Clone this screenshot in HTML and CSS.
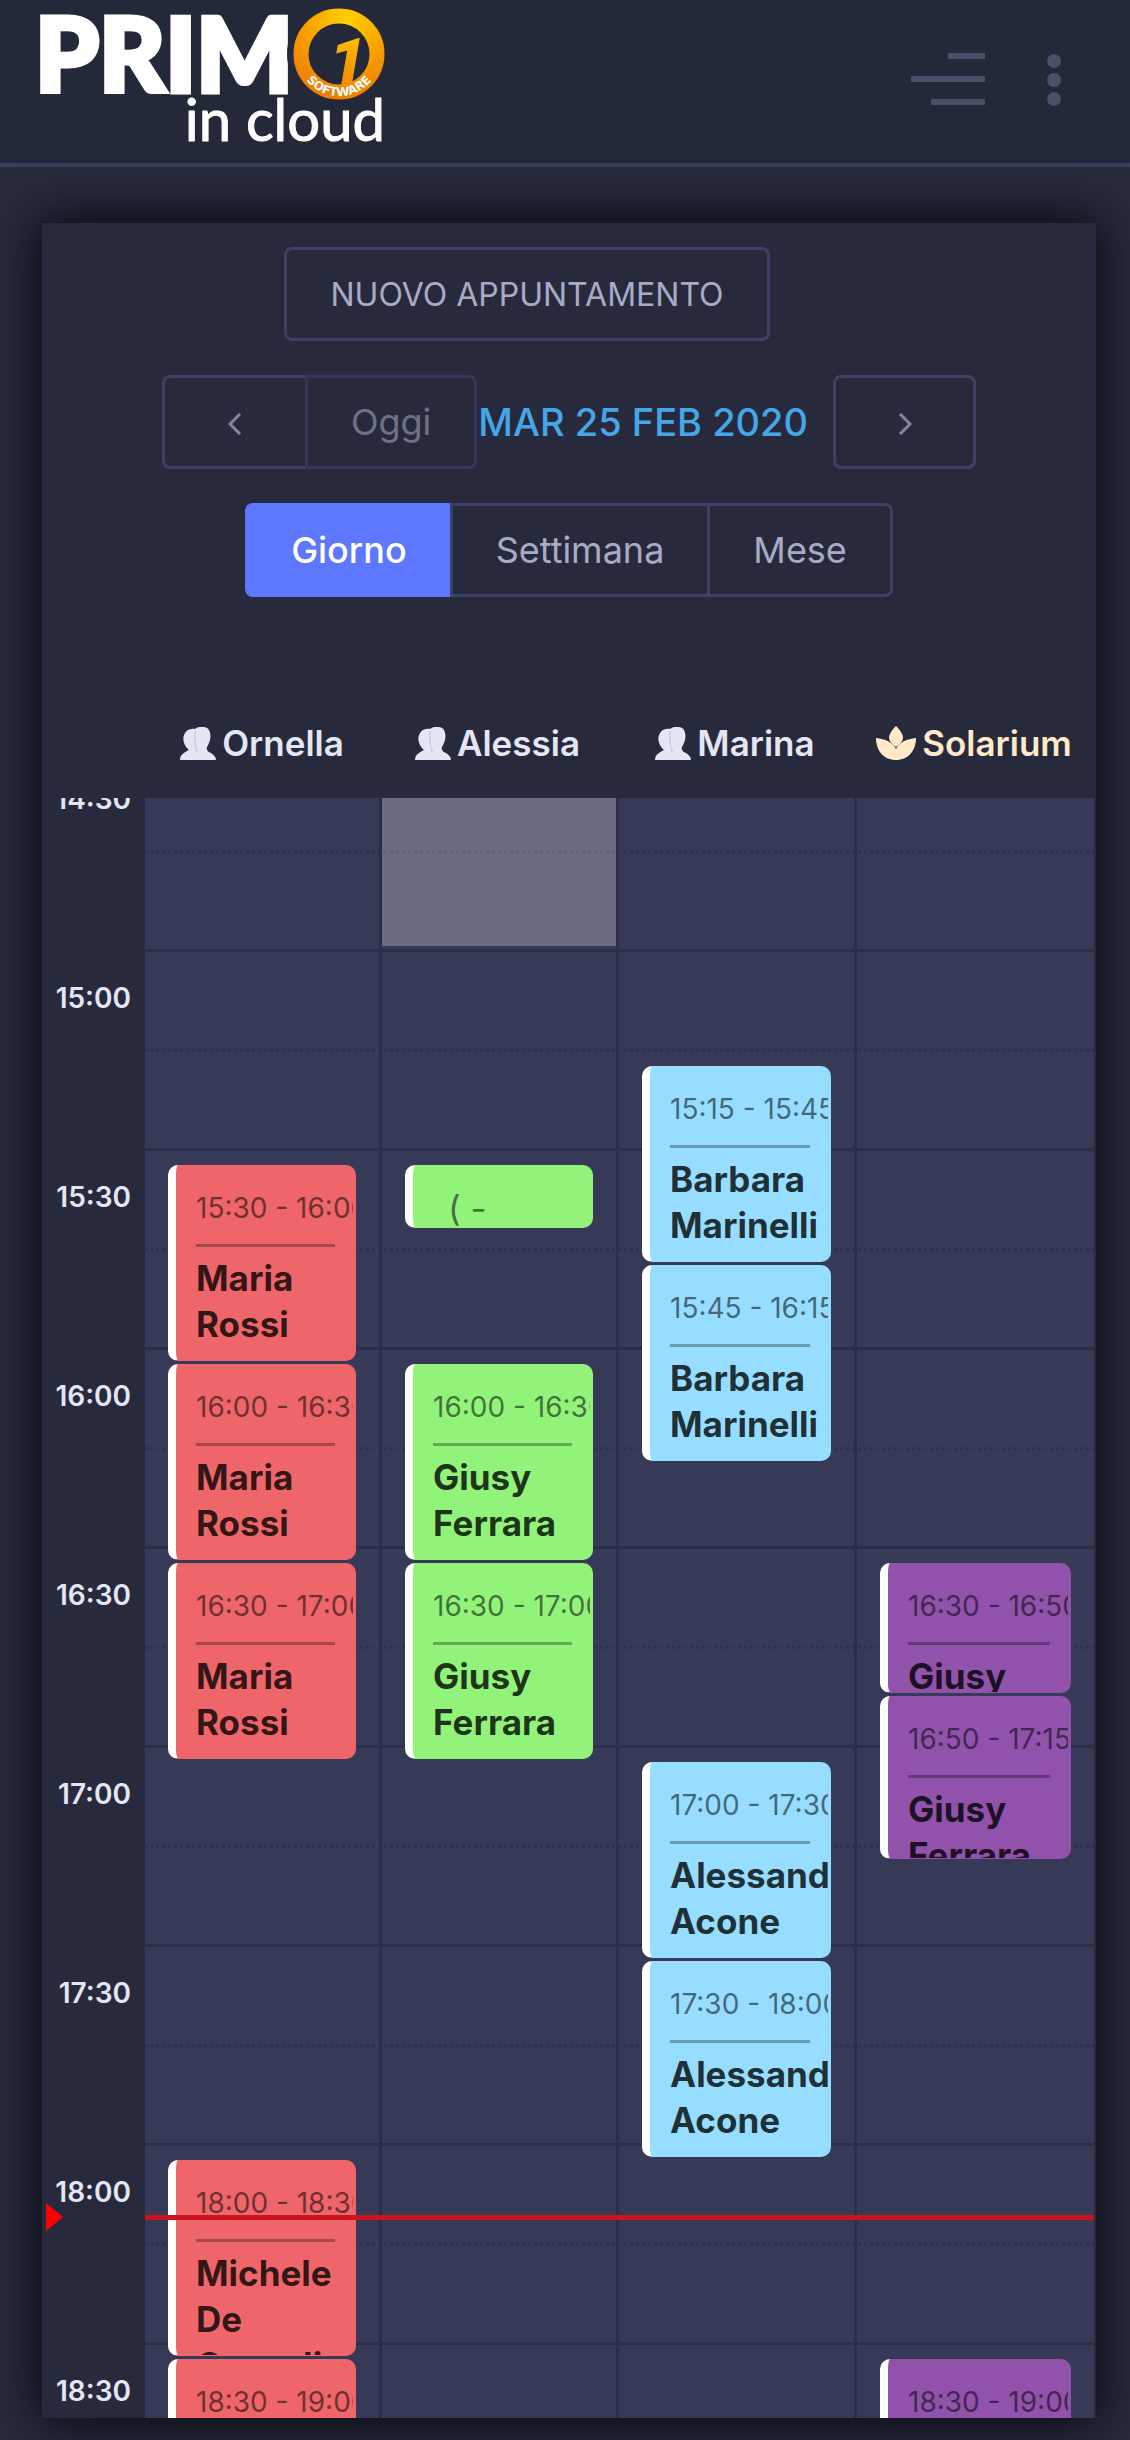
FILE: index.html
```
<!DOCTYPE html>
<html lang="it">
<head>
    <meta charset="UTF-8">
    <meta name="viewport" content="width=device-width, initial-scale=1.0">
    <title>Primo in cloud - Agenda</title>
    <link rel="stylesheet" href="styles.css">
</head>
<body>

    <!-- Icone condivise -->
    <svg class="symbols" aria-hidden="true">
        <symbol id="icon-users" viewBox="0 0 36 33">
            <path d="M0 33 C0 28 3 26 9 23 C5 20 2 13 4 8 C6 3 10 1 15 2 C18 -1 27 -1 29 3 C32 9 30 15 27 20 C26 23 28 25 31 26 C34 28 36 30 36 33 Z" fill="currentColor"/>
            <path d="M16 4 C13 9 16 11 15 16 C15 20 17 21 17 25" fill="none" stroke="#b9bfd3" stroke-width="1"/>
        </symbol>
        <symbol id="icon-spa" viewBox="0 0 40 34">
            <path d="M20 0 C25 5 27 9 27 12 C27 15 24 18 20 21 C16 18 13 15 13 12 C13 9 15 5 20 0 Z" fill="currentColor"/>
            <path d="M0 12 C9 13 17 16 20 23 C23 16 31 13 40 12 C40 25 32 34 20 34 C8 34 0 25 0 12 Z" fill="currentColor"/>
        </symbol>
    </svg>

    <header class="topbar">
        <a href="#" class="logo" aria-label="Primo in cloud">
            <svg width="350" height="150" viewBox="0 0 350 150">
                <defs>
                    <radialGradient id="gold" gradientUnits="userSpaceOnUse" cx="307" cy="22" r="80">
                        <stop offset="0" stop-color="#ffd400"/>
                        <stop offset="0.5" stop-color="#f9a000"/>
                        <stop offset="1" stop-color="#ee7a05"/>
                    </radialGradient>
                    <path id="ring-text" d="M257 54 A42 42 0 0 0 341 54"/>
                </defs>
                <text x="-5" y="92" class="logo-primo">PRIM</text>
                <circle cx="299" cy="54" r="52" fill="#242939"/>
                <circle cx="299" cy="54" r="38" fill="none" stroke="url(#gold)" stroke-width="15"/>
                <text x="289" y="85" class="logo-one" fill="url(#gold)">1</text>
                <text class="logo-software"><textPath href="#ring-text" startOffset="50%" text-anchor="middle">SOFTWARE</textPath></text>
                <text x="345" y="141" text-anchor="end" class="logo-cloud">in cloud</text>
            </svg>
        </a>
        <div class="topbar-actions">
            <button class="icon-button" aria-label="Menu">
                <svg width="76" height="54" viewBox="0 0 76 54" fill="currentColor">
                    <rect x="38" y="0" width="37" height="6" rx="1"/>
                    <rect x="1" y="23" width="74" height="6" rx="1"/>
                    <rect x="21" y="46" width="54" height="6" rx="1"/>
                </svg>
            </button>
            <button class="icon-button" aria-label="Altro">
                <svg width="14" height="54" viewBox="0 0 14 54" fill="currentColor">
                    <circle cx="7" cy="8" r="7"/>
                    <circle cx="7" cy="27" r="7"/>
                    <circle cx="7" cy="46" r="7"/>
                </svg>
            </button>
        </div>
    </header>

    <main class="card">
        <!-- Barra degli strumenti -->
        <div class="toolbar">
            <button class="btn btn-new">NUOVO APPUNTAMENTO</button>
            <div class="toolbar-row">
                <div class="btn-group">
                    <button class="btn btn-arrow" aria-label="Precedente">
                        <svg width="16" height="22" viewBox="0 0 16 22"><path d="M13 1 L3 11 L13 21"/></svg>
                    </button>
                    <button class="btn btn-today" disabled>Oggi</button>
                </div>
                <h2 class="date">MAR 25 FEB 2020</h2>
                <button class="btn btn-arrow" aria-label="Successivo">
                    <svg width="16" height="22" viewBox="0 0 16 22"><path d="M3 1 L13 11 L3 21"/></svg>
                </button>
            </div>
            <div class="btn-group">
                <button class="btn active">Giorno</button>
                <button class="btn">Settimana</button>
                <button class="btn">Mese</button>
            </div>
        </div>

        <!-- Intestazione colonne -->
        <div class="resources">
            <div class="resource"><svg width="36" height="33"><use href="#icon-users"/></svg>Ornella</div>
            <div class="resource"><svg width="36" height="33"><use href="#icon-users"/></svg>Alessia</div>
            <div class="resource"><svg width="36" height="33"><use href="#icon-users"/></svg>Marina</div>
            <div class="resource solarium"><svg width="40" height="34"><use href="#icon-spa"/></svg>Solarium</div>
        </div>

        <!-- Griglia oraria -->
        <div class="scroller">
            <div class="time-grid">
                <div class="slots">
                    <div class="slot"><span class="slot-time">14:30</span></div>
                    <div class="slot minor"></div>
                    <div class="slot"><span class="slot-time">15:00</span></div>
                    <div class="slot minor"></div>
                    <div class="slot"><span class="slot-time">15:30</span></div>
                    <div class="slot minor"></div>
                    <div class="slot"><span class="slot-time">16:00</span></div>
                    <div class="slot minor"></div>
                    <div class="slot"><span class="slot-time">16:30</span></div>
                    <div class="slot minor"></div>
                    <div class="slot"><span class="slot-time">17:00</span></div>
                    <div class="slot minor"></div>
                    <div class="slot"><span class="slot-time">17:30</span></div>
                    <div class="slot minor"></div>
                    <div class="slot"><span class="slot-time">18:00</span></div>
                    <div class="slot minor"></div>
                    <div class="slot"><span class="slot-time">18:30</span></div>
                    <div class="slot minor"></div>
                </div>

                <!-- Una riga ogni 5 minuti a partire dalle 14:30 -->
                <div class="columns">
                    <div class="column">
                        <div class="event red" style="grid-row: 13 / span 6">
                            <div class="event-time">15:30 - 16:00</div>
                            <div class="event-name">Maria Rossi</div>
                        </div>
                        <div class="event red" style="grid-row: 19 / span 6">
                            <div class="event-time">16:00 - 16:30</div>
                            <div class="event-name">Maria Rossi</div>
                        </div>
                        <div class="event red" style="grid-row: 25 / span 6">
                            <div class="event-time">16:30 - 17:00</div>
                            <div class="event-name">Maria Rossi</div>
                        </div>
                        <div class="event red" style="grid-row: 43 / span 6">
                            <div class="event-time">18:00 - 18:30</div>
                            <div class="event-name">Michele De Gerardi</div>
                        </div>
                        <div class="event red" style="grid-row: 49 / span 6">
                            <div class="event-time">18:30 - 19:00</div>
                        </div>
                    </div>
                    <div class="column">
                        <div class="highlight" style="grid-row: 1 / span 6"></div>
                        <div class="event green" style="grid-row: 13 / span 2">
                            <div class="event-note">( -</div>
                        </div>
                        <div class="event green" style="grid-row: 19 / span 6">
                            <div class="event-time">16:00 - 16:30</div>
                            <div class="event-name">Giusy Ferrara</div>
                        </div>
                        <div class="event green" style="grid-row: 25 / span 6">
                            <div class="event-time">16:30 - 17:00</div>
                            <div class="event-name">Giusy Ferrara</div>
                        </div>
                    </div>
                    <div class="column">
                        <div class="event blue" style="grid-row: 10 / span 6">
                            <div class="event-time">15:15 - 15:45</div>
                            <div class="event-name">Barbara Marinelli</div>
                        </div>
                        <div class="event blue" style="grid-row: 16 / span 6">
                            <div class="event-time">15:45 - 16:15</div>
                            <div class="event-name">Barbara Marinelli</div>
                        </div>
                        <div class="event blue" style="grid-row: 31 / span 6">
                            <div class="event-time">17:00 - 17:30</div>
                            <div class="event-name">Alessandro Acone</div>
                        </div>
                        <div class="event blue" style="grid-row: 37 / span 6">
                            <div class="event-time">17:30 - 18:00</div>
                            <div class="event-name">Alessandro Acone</div>
                        </div>
                    </div>
                    <div class="column">
                        <div class="event purple" style="grid-row: 25 / span 4">
                            <div class="event-time">16:30 - 16:50</div>
                            <div class="event-name">Giusy Ferrara</div>
                        </div>
                        <div class="event purple" style="grid-row: 29 / span 5">
                            <div class="event-time">16:50 - 17:15</div>
                            <div class="event-name">Giusy Ferrara</div>
                        </div>
                        <div class="event purple" style="grid-row: 49 / span 6">
                            <div class="event-time">18:30 - 19:00</div>
                        </div>
                    </div>
                </div>

                <!-- Ora attuale -->
                <div class="now" style="top: 82%"></div>
            </div>
        </div>
    </main>

</body>
</html>
```
FILE: styles.css
```
* {
    box-sizing: border-box;
}

body {
    font-family: Inter, "Open Sans", sans-serif;
    background-color: #282a3e;
    color: #e4e6f3;
    margin: 0;
    height: 100vh;
    display: flex;
    flex-direction: column;
}

.symbols {
    display: none;
}

/* Barra superiore */
.topbar {
    display: flex;
    justify-content: space-between;
    flex-shrink: 0;
    height: 167px;
    padding: 0 69px 0 40px;
    background-color: #242939;
    border-bottom: 4px solid #3b3d60;
}

.logo svg {
    display: block;
    overflow: visible;
}

.logo-primo {
    font-family: Lato, sans-serif;
    font-weight: 900;
    font-size: 102px;
    fill: #fff;
    stroke: #fff;
    stroke-width: 5px;
}

.logo-one {
    font-family: Roboto, sans-serif;
    font-weight: 900;
    font-style: italic;
    font-size: 66px;
}

.logo-software {
    font-family: "DejaVu Sans", sans-serif;
    font-weight: 700;
    font-size: 12px;
    fill: #fff;
}

.logo-cloud {
    font-family: Lato, sans-serif;
    font-size: 58px;
    fill: #fff;
    stroke: #fff;
    stroke-width: 1px;
    stroke-linejoin: round;
}

.topbar-actions {
    display: flex;
    align-items: flex-start;
    gap: 61px;
    padding-top: 53px;
}

.icon-button {
    background: none;
    border: none;
    padding: 0;
    color: #4c4f69;
    cursor: pointer;
}

.icon-button svg {
    display: block;
}

/* Riquadro agenda */
.card {
    flex: 1;
    min-height: 0;
    display: flex;
    flex-direction: column;
    margin: 56px 34px 22px 42px;
    padding-right: 2px;
    background-color: #272a3c;
    box-shadow: 0 0 48px 4px #08080d;
}

.toolbar {
    display: flex;
    flex-direction: column;
    align-items: center;
    gap: 34px;
    padding: 24px 0 91px 2px;
}

.toolbar-row {
    display: flex;
    align-items: center;
}

.btn-group {
    display: flex;
}

.btn {
    height: 94px;
    padding: 0 43px;
    background-color: transparent;
    border: 3px solid #3e4068;
    border-radius: 8px;
    color: #a9abc6;
    font-family: inherit;
    font-size: 36px;
    cursor: pointer;
}

.btn-group .btn:not(:last-child) {
    border-right: none;
    border-top-right-radius: 0;
    border-bottom-right-radius: 0;
}

.btn-group .btn:not(:first-child) {
    border-top-left-radius: 0;
    border-bottom-left-radius: 0;
}

.btn-new {
    margin-right: 84px;
    font-size: 32px;
}

.btn-arrow {
    width: 143px;
}

.btn-arrow svg {
    fill: none;
    stroke: #8385a0;
    stroke-width: 3;
}

.btn-today {
    color: #6f7188;
    border-color: #35375a;
}

.btn.active {
    background-color: #5d78ff;
    border-color: #5d78ff;
    color: #fff;
    font-weight: 500;
}

.date {
    margin: 0 25px 0 1px;
    color: #45a6e8;
    font-size: 38px;
    font-weight: 500;
}

/* Colonne */
.resources,
.columns {
    display: grid;
    grid-template-columns: 234fr 237fr 238fr 240fr;
}

.resources {
    flex-shrink: 0;
    height: 110px;
    margin-left: 103px;
}

.resource {
    display: flex;
    align-items: center;
    justify-content: center;
    gap: 6px;
    font-size: 35px;
    font-weight: 600;
}

.solarium {
    color: #ffe9c9;
}

.scroller {
    flex: 1;
    min-height: 0;
    overflow: hidden;
}

.time-grid {
    position: relative;
    margin-top: -48px;
}

.slot {
    height: 100px;
    margin-left: 103px;
    background-color: #373a57;
    border-top: 3px solid #2c2e49;
}

.slot.minor {
    height: 99px;
    border-top: 3px dotted #2f314e;
}

.slot-time {
    display: block;
    width: 103px;
    margin-left: -103px;
    padding-right: 14px;
    line-height: 93px;
    text-align: right;
    font-size: 28px;
    font-weight: 600;
}

.columns {
    position: absolute;
    inset: 0 0 0 103px;
    grid-template-rows: 100%;
}

.column {
    display: grid;
    grid-template-rows: repeat(54, minmax(0, 1fr));
    min-width: 0;
}

.column + .column {
    border-left: 3px solid #2c2e49;
}

.highlight {
    margin-bottom: 3px;
    background-color: rgba(255, 255, 255, 0.25);
}

/* Appuntamenti */
.event {
    margin: 17px 23px -14px;
    padding: 20px 0 0 20px;
    overflow: hidden;
    border-left: 8px solid #fff;
    border-right: 3px solid transparent;
    border-bottom: 1px solid transparent;
    border-radius: 10px;
    color: rgba(0, 0, 0, 0.8);
    line-height: 46px;
}

.event-time,
.event-note {
    color: rgba(0, 0, 0, 0.55);
    font-size: 28px;
    white-space: nowrap;
}

.event-time::after {
    content: "";
    display: block;
    height: 3px;
    margin: 13px 18px 8px 0;
    background-color: rgba(0, 0, 0, 0.3);
}

.event-note {
    padding-left: 15px;
    font-size: 35px;
}

.event-name {
    font-size: 35px;
    font-weight: 700;
}

.red {
    background-color: #ee6669;
}

.green {
    background-color: #92f37b;
}

.blue {
    background-color: #96ddff;
}

.purple {
    background-color: #9052ab;
}

/* Linea dell'ora attuale */
.now {
    position: absolute;
    left: 103px;
    right: 0;
    height: 5px;
    margin-top: -4px;
    background-color: #cc1420;
}

.now::before {
    content: "";
    position: absolute;
    top: -12px;
    left: -99px;
    border: 14px solid transparent;
    border-left: 17px solid #ff0000;
    border-right: none;
}
```
